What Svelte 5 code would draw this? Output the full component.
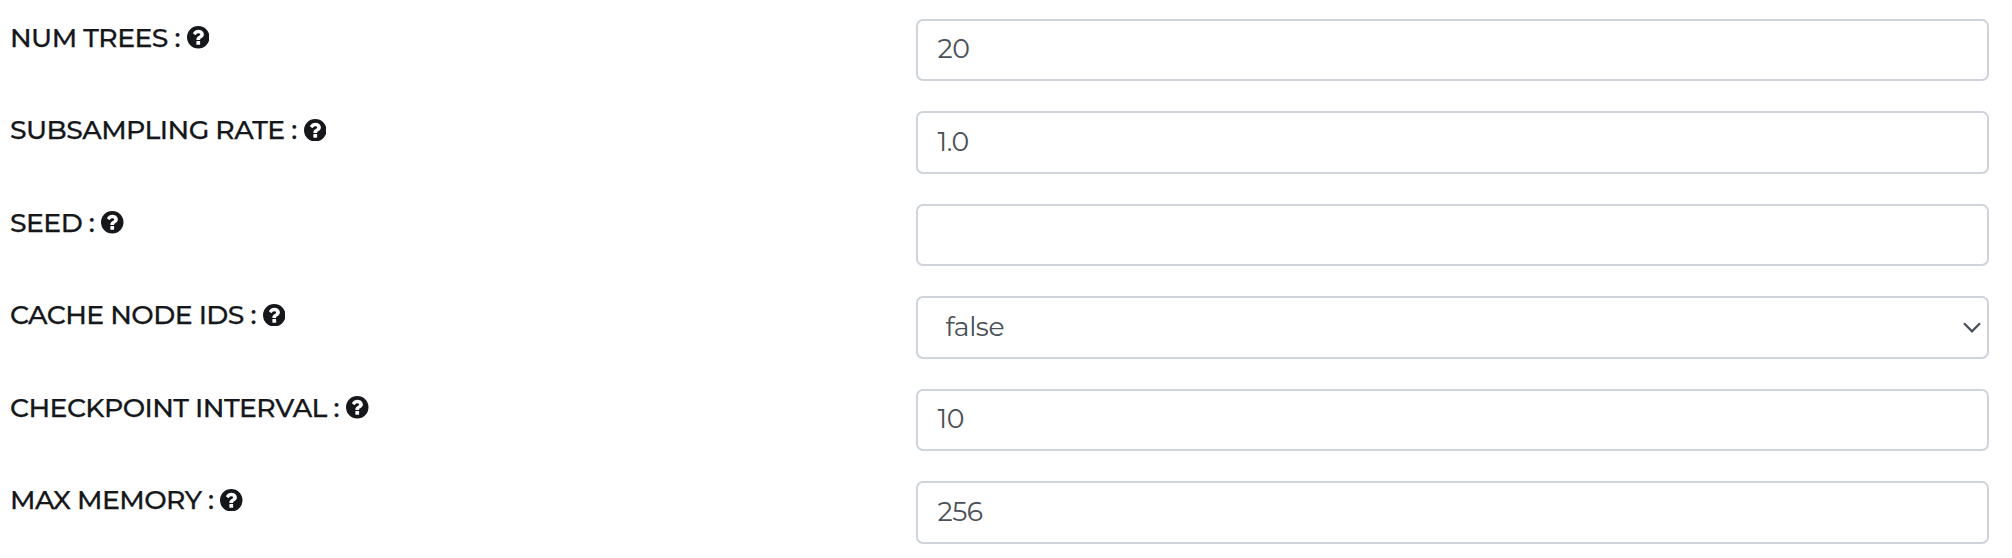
<script>
  const fields = [
    { label: 'NUM TREES :', value: '20' },
    { label: 'SUBSAMPLING RATE :', value: '1.0' },
    { label: 'SEED :', value: '' },
    { label: 'CACHE NODE IDS :', value: 'false', select: true },
    { label: 'CHECKPOINT INTERVAL :', value: '10' },
    { label: 'MAX MEMORY :', value: '256' }
  ];
</script>

<form class="form">
  {#each fields as field}
    <div class="row">
      <div class="label">
        <span class="text">{field.label}</span>
        <svg class="help" viewBox="0 0 1536 1536" aria-hidden="true">
          <path fill="currentColor" fill-rule="evenodd" d="M896 1248v-192q0-14-9-23t-23-9h-192q-14 0-23 9t-9 23v192q0 14 9 23t23 9h192q14 0 23-9t9-23zm256-672q0-88-55.500-163t-138.500-116-170-41q-243 0-371 213-15 24 8 42l132 100q7 6 19 6 16 0 25-12 53-68 86-92 34-24 86-24 48 0 85.500 26t37.500 59q0 38-20 61t-68 45q-63 28-115.500 86.500t-52.500 125.500v36q0 14 9 23t23 9h192q14 0 23-9t9-23q0-19 21.500-49.500t54.500-49.500q32-18 49-28.500t46-35 44.500-48 28-60.500 12.500-81zm384 192a768 768 0 1 1-1536 0a768 768 0 1 1 1536 0z" />
        </svg>
      </div>
      <div class="control" class:select={field.select}>
        <span class="value">{field.value}</span>
        {#if field.select}
          <svg class="chevron" viewBox="0 0 18 11" aria-hidden="true">
            <path d="M1 1.300 9 9.300l8-8" fill="none" stroke="currentColor" stroke-width="2.300" />
          </svg>
        {/if}
      </div>
    </div>
  {/each}
</form>

<style>
  :global(body) {
    margin: 0;
    background: #fff;
  }
  .form {
    box-sizing: border-box;
    height: 558px;
    padding: 18.9px 23px 0 10px;
    display: flex;
    flex-direction: column;
    gap: 30px;
    font-family: Montserrat, Inter, sans-serif;
    overflow: hidden;
  }
  .row {
    display: grid;
    grid-template-columns: 906px 1fr;
    height: 62.5px;
    flex: none;
  }
  .label {
    display: flex;
    align-items: center;
    gap: 7px;
    height: 37px;
    color: #15171a;
    font-size: 26.7px;
    font-weight: 500;
    letter-spacing: -0.56px;
    white-space: pre;
    -webkit-text-stroke: 0.25px #15171a;
  }
  .text {
    flex: none;
  }
  .help {
    flex: none;
    width: 22.5px;
    height: 22.5px;
  }
  .control {
    box-sizing: border-box;
    display: flex;
    align-items: center;
    justify-content: space-between;
    padding: 0 6px 3px 19.5px;
    border: 2px solid #ced4da;
    border-radius: 7px;
    color: #495057;
    font-size: 26.7px;
    font-weight: 400;
    letter-spacing: -0.45px;
  }
  .select {
    padding-left: 27.5px;
  }
  .chevron {
    width: 18px;
    height: 11px;
    margin-top: 2px;
  }
</style>
